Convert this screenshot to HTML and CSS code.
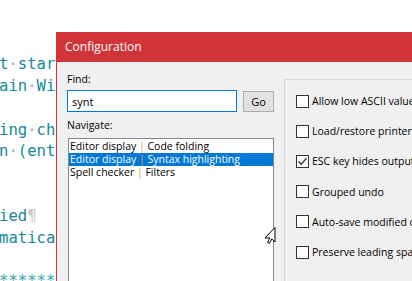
FILE: index.html
```html
<!DOCTYPE html>
<html lang="en">
<head>
    <meta charset="UTF-8">
    <meta name="viewport" content="width=device-width, initial-scale=1.0">
    <title>Configuration</title>
    <link rel="stylesheet" href="styles.css">
</head>
<body>
    <pre class="editor">


t<span class="ws">·</span>start<span class="ws">·</span>the<span class="ws">·</span>editor
ain<span class="ws">·</span>Window

ing<span class="ws">·</span>characters
n<span class="ws">·</span>(entered)


ied<span class="pil">¶</span>
matically

<span class="stars">******************</span></pre>

    <div class="dialog">
        <div class="titlebar">Configuration</div>
        <div class="dialog-body">
            <div class="left">
                <label class="lbl">Find:</label>
                <div class="find-row">
                    <input type="text" class="find" value="synt">
                    <button class="btn">Go</button>
                </div>
                <label class="lbl nav-lbl">Navigate:</label>
                <div class="listbox">
                    <div class="item">Editor display <span class="sep">|</span> Code folding</div>
                    <div class="item selected">Editor display <span class="sep">|</span> Syntax highlighting</div>
                    <div class="item">Spell checker <span class="sep">|</span> Filters</div>
                </div>
            </div>
            <div class="panel">
                <div class="check-row"><span class="box"></span>Allow low ASCII values</div>
                <div class="check-row"><span class="box"></span>Load/restore printer settings</div>
                <div class="check-row"><span class="box checked">
                    <svg width="11" height="11" viewBox="0 0 11 11"><path d="M1.5 5.5 L4.2 8.3 L9.5 2.2" fill="none" stroke="#333" stroke-width="1.3"/></svg>
                </span>ESC key hides output</div>
                <div class="check-row"><span class="box"></span>Grouped undo</div>
                <div class="check-row"><span class="box"></span>Auto-save modified documents</div>
                <div class="check-row"><span class="box"></span>Preserve leading spaces</div>
            </div>
        </div>
    </div>

    <svg class="cursor" width="12" height="17" viewBox="0 0 12 17">
        <path d="M11 0.5 L11 15 L7.8 11.9 L5.4 16.4 L3.6 15.5 L5.8 11 L1 11 Z" fill="#fff" stroke="#000" stroke-width="1"/>
    </svg>
</body>
</html>
```
FILE: styles.css
```css
body {
    margin: 0;
    width: 412px;
    height: 281px;
    overflow: hidden;
    position: relative;
    background: #ffffff;
}
.editor {
    margin: 0 0 0 -1px;
    padding-top: 11px;
    font-family: "DejaVu Sans Mono", monospace;
    font-size: 15.6px;
    line-height: 21.7px;
    color: #14889a;
}
.ws { color: #a8a8a8; }
.pil { color: #c9c9c9; }
.stars { color: #3aa3b0; }

.dialog {
    position: absolute;
    left: 56px;
    top: 32px;
    width: 380px;
    height: 260px;
    background: #f0f0f0;
    border-left: 1px solid #d13438;
    font-family: "Open Sans", sans-serif;
    font-size: 10.5px;
    overflow: hidden;
}
.titlebar {
    height: 30px;
    line-height: 30px;
    background: #d13438;
    color: #fff;
    padding-left: 8px;
    font-size: 12px;
}
.dialog-body {
    display: flex;
    align-items: flex-start;
}
.left {
    width: 207px;
    padding: 10px 0 0 10px;
    display: flex;
    flex-direction: column;
}
.lbl {
    display: block;
    line-height: 15px;
    color: #000;
}
.find-row {
    display: flex;
    align-items: center;
    gap: 6px;
    margin-top: 3px;
}
.find {
    box-sizing: border-box;
    width: 170px;
    height: 22px;
    border: 1px solid #0078d7;
    padding: 0 4px;
    font: inherit;
    font-size: 11px;
    color: #000;
    background: #fff;
    outline: none;
}
.btn {
    box-sizing: border-box;
    width: 31px;
    height: 21px;
    margin-top: 1px;
    border: 1px solid #adadad;
    background: #e1e1e1;
    font: inherit;
    font-size: 11px;
    padding: 0;
    color: #000;
}
.nav-lbl { margin-top: 6px; }
.listbox {
    box-sizing: border-box;
    margin: 5px 0 0 1px;
    width: 206px;
    height: 160px;
    background: #fff;
    border: 1px solid #828790;
    padding-top: 1px;
}
.item {
    height: 13px;
    line-height: 13px;
    padding-left: 1px;
    white-space: nowrap;
    color: #000;
}
.item.selected {
    background: #0078d7;
    color: #fff;
}
.sep { color: #e0a03a; }

.panel {
    margin: 17px 0 0 10px;
    flex: 1;
    height: 240px;
    border: 1px solid #d9d9d9;
    padding: 6px 0 0 11px;
}
.check-row {
    display: flex;
    align-items: center;
    gap: 3px;
    height: 30.2px;
    white-space: nowrap;
    color: #000;
}
.box {
    box-sizing: border-box;
    width: 13px;
    height: 13px;
    border: 1px solid #333;
    background: #fff;
    display: flex;
    align-items: center;
    justify-content: center;
}
.cursor {
    position: absolute;
    left: 264px;
    top: 227px;
}
```
